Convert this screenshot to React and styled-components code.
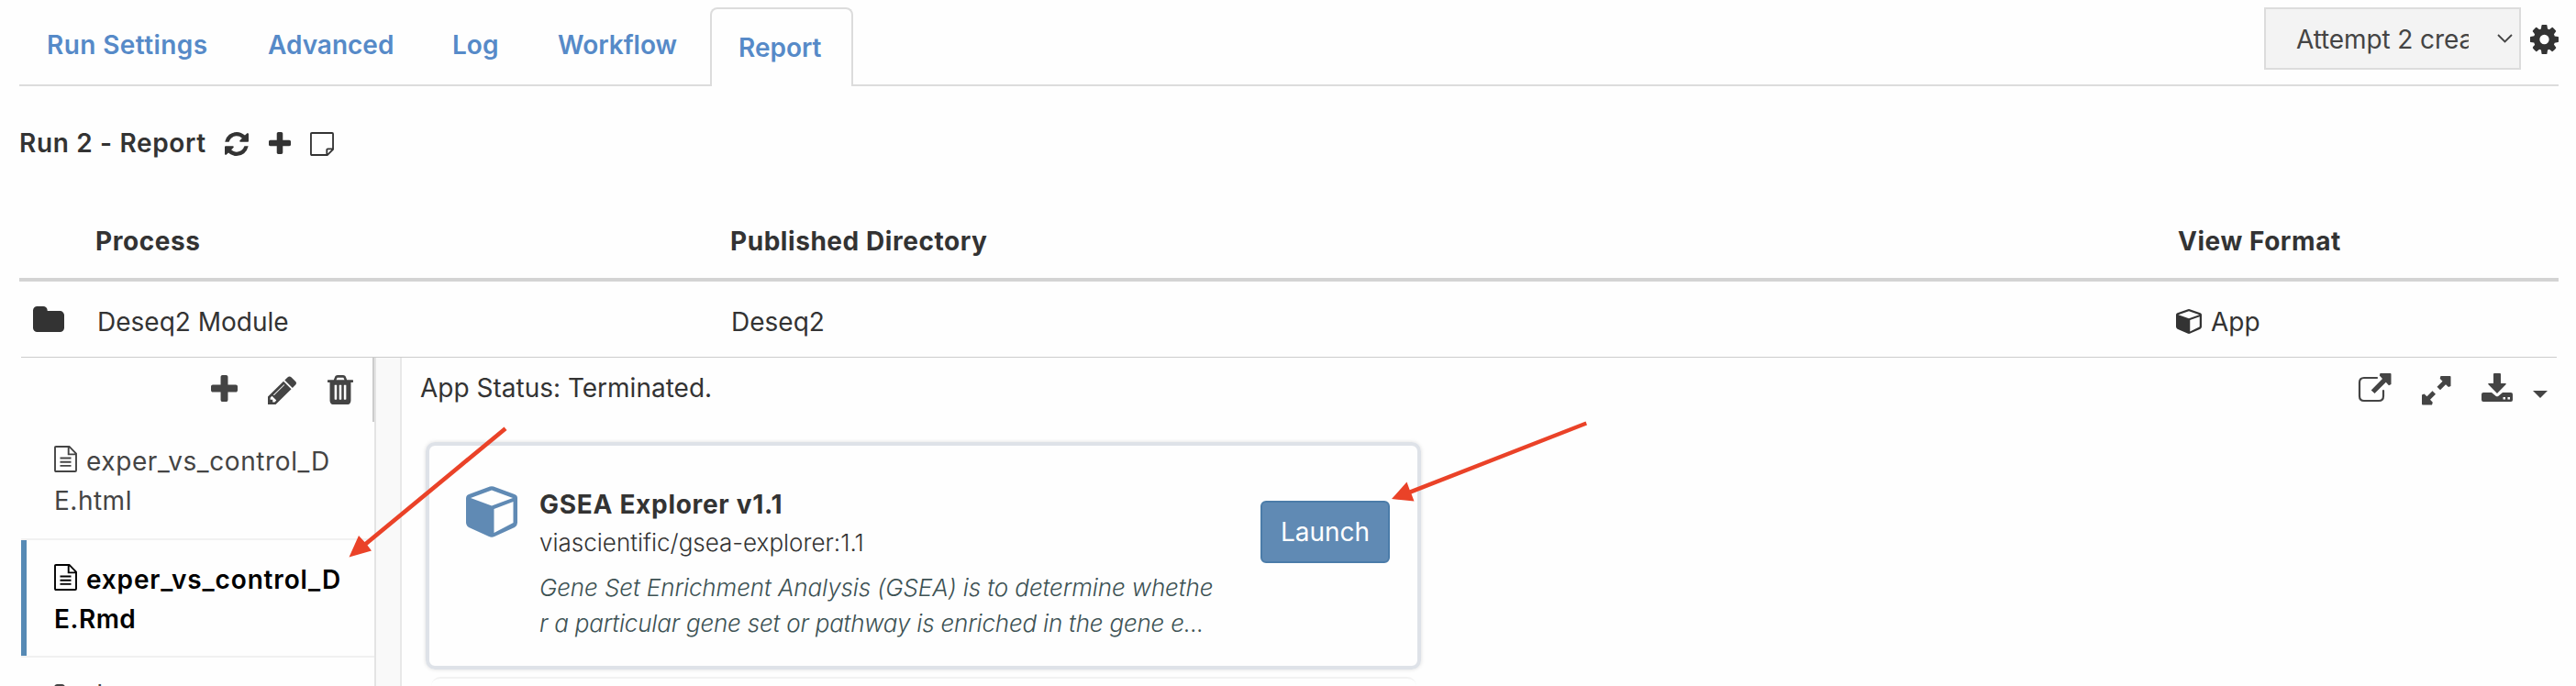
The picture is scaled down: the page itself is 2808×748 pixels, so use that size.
import React from "react";
import styled, { createGlobalStyle, css } from "styled-components";

const Global = createGlobalStyle`
  * { box-sizing: border-box; }
  body { margin: 0; background: #fefefe; overflow: hidden; }
`;

const Page = styled.div`
  position: relative;
  width: 2808px;
  height: 748px;
  overflow: hidden;
  padding: 0 19px 0 21px;
  background: #fefefe;
  color: #333;
  font-family: Inter, "Liberation Sans", sans-serif;
  font-size: 28px;
  line-height: 43px;
`;

const TopBar = styled.div`
  display: flex;
  height: 94px;
  border-bottom: 2px solid #dcdcdc;
`;

const Tab = styled.div`
  height: 94px;
  padding: ${(p) => (p.$active ? "21px 29px 0" : "20px 30px 0")};
  margin: ${(p) => (p.$active ? "8px 0 -2px 2px" : "8px 4px 0 0")};
  color: #568ac8;
  font-weight: 600;
  letter-spacing: ${(p) => p.$ls || 0}px;
  width: ${(p) => p.$w}px;
  white-space: nowrap;
  ${(p) =>
    p.$active &&
    css`
      height: 86px;
      background: #fefefe;
      border: 2px solid #dcdcdc;
      border-bottom: 0;
      border-radius: 8px 8px 0 0;
    `}
`;

const TopRight = styled.div`
  display: flex;
  margin-left: auto;
  gap: 10px;
`;

const Attempt = styled.div`
  display: flex;
  justify-content: space-between;
  width: 280px;
  height: 68px;
  margin-top: 8px;
  padding: 12px 6px 0 33px;
  border: 2px solid #dcdcdc;
  background: #f3f3f3;
  color: #444;
`;

const AttemptText = styled.span`
  width: 188px;
  height: 43px;
  overflow: hidden;
  white-space: nowrap;
  letter-spacing: -0.1px;
`;

const Svg = styled.svg`
  display: block;
  flex: none;
  fill: currentColor;
  color: ${(p) => p.$color || "inherit"};
  margin-top: ${(p) => p.$top || 0}px;
  margin-left: ${(p) => p.$left || 0}px;
`;

const Title = styled.div`
  display: flex;
  height: 126px;
  padding-top: 41px;
  font-weight: 600;
`;
const TitleText = styled.span`
  width: 223px;
  white-space: nowrap;
  letter-spacing: 0.65px;
`;

const Row = styled.div`
  display: grid;
  grid-template-columns: 83px 692px 1578px 1fr;
  white-space: nowrap;
`;
const HeadRow = styled(Row)`
  height: 87px;
  padding-top: 22px;
  font-weight: 700;
  letter-spacing: 0.55px;
  border-bottom: 4px solid #d3d3d3;
`;
const BodyRow = styled(Row)`
  grid-template-columns: 83px 691px 1579px 1fr;
  height: 83px;
  padding-top: 23px;
  margin: 0 2px;
  border-bottom: 1px solid #ccc;
`;
const Cell = styled.div`
  display: flex;
  padding-left: ${(p) => p.$pad || 0}px;
`;

const Body = styled.div`
  display: flex;
  height: 358px;
  margin-left: 2px;
`;
const Files = styled.div`
  flex: none;
  width: 387px;
  border-right: 2px solid #e4e4e4;
`;
const FileTools = styled.div`
  display: flex;
  height: 70px;
  padding-left: 207px;
  color: #444;
  border-right: 2px solid #ccc;
`;
const FileItem = styled.div`
  height: ${(p) => p.$h}px;
  padding: ${(p) => p.$pad}px 0 0 36px;
  border-bottom: 2px solid #f1f1f1;
  color: ${(p) => (p.$active ? "#000" : "#444")};
  font-weight: ${(p) => (p.$active ? 600 : 400)};
  white-space: nowrap;
  ${(p) => p.$active && css`box-shadow: inset 6px 0 #568ab5;`}
`;
const FileLine = styled.div`
  display: flex;
  gap: 10px;
  letter-spacing: ${(p) => p.$ls || 0}px;
`;
const Splitter = styled.div`
  flex: none;
  width: 28px;
  background: #f9f9f9;
  border-right: 2px solid #e8e8e8;
`;
const Main = styled.div`
  flex: 1;
  padding-left: 20px;
`;
const Status = styled.div`
  display: flex;
  height: 92px;
  padding-top: 12px;
`;
const Tools = styled.div`
  display: flex;
  color: #444;
  margin: -12px 12px 0 auto;
`;
const Card = styled.div`
  display: flex;
  width: 1085px;
  height: 248px;
  margin-left: 6px;
  padding: 42px 0 0 40px;
  border: 4px solid #dee2e8;
  border-radius: 10px;
  box-shadow: 0 0 4px #0002;
`;
const NextCard = styled.div`
  width: 1074px;
  height: 20px;
  margin: 8px 0 0 12px;
  border-top: 2px solid #f2f2f2;
  border-radius: 10px;
`;
const CardText = styled.div`
  flex: none;
  width: 786px;
  padding-left: 24px;
  white-space: nowrap;
`;
const Name = styled.div`
  font-weight: 700;
  line-height: 44px;
  letter-spacing: 0.7px;
`;
const Image = styled.div`
  font-size: 26px;
  line-height: 39px;
  font-weight: 300;
`;
const Description = styled.div`
  margin-top: 10px;
  color: #3d5254;
  font-size: 26px;
  font-style: italic;
  font-weight: 300;
  line-height: 39px;
`;
const DescLine = styled.div`
  letter-spacing: ${(p) => p.$ls || 0}px;
`;
const Launch = styled.button`
  flex: none;
  width: 141px;
  height: 68px;
  margin: 18px 0 0 24px;
  padding: 0;
  border: 2px solid #4b7ca9;
  border-radius: 6px;
  background: #608ab4;
  color: #fff;
  font: inherit;
`;
const Arrows = styled.svg`
  position: absolute;
  left: 0;
  top: 0;
  pointer-events: none;
`;

const P = {
  refresh: "M1639 1056q0 5-1 7-64 268-268 434.5t-478 166.5q-146 0-282.5-55t-243.5-157l-129 129q-19 19-45 19t-45-19-19-45v-448q0-26 19-45t45-19h448q26 0 45 19t19 45-19 45l-137 137q71 66 161 102t187 36q134 0 250-65t186-179q11-17 53-117 8-23 30-23h192q13 0 22.5 9.5t9.5 22.5zm25-800v448q0 26-19 45t-45 19h-448q-26 0-45-19t-19-45 19-45l138-138q-148-137-349-137-134 0-250 65t-186 179q-11 17-53 117-8 23-30 23h-199q-13 0-22.5-9.5t-9.5-22.5v-7q65-268 270-434.5t480-166.5q146 0 284 55.5t245 156.5l130-129q19-19 45-19t45 19 19 45z",
  plus: "M1600 736v192q0 40-28 68t-68 28h-416v416q0 40-28 68t-68 28h-192q-40 0-68-28t-28-68v-416h-416q-40 0-68-28t-28-68v-192q0-40 28-68t68-28h416v-416q0-40 28-68t68-28h192q40 0 68 28t28 68v416h416q40 0 68 28t28 68z",
  trash: "M704 1376v-704q0-14-9-23t-23-9h-64q-14 0-23 9t-9 23v704q0 14 9 23t23 9h64q14 0 23-9t9-23zm256 0v-704q0-14-9-23t-23-9h-64q-14 0-23 9t-9 23v704q0 14 9 23t23 9h64q14 0 23-9t9-23zm256 0v-704q0-14-9-23t-23-9h-64q-14 0-23 9t-9 23v704q0 14 9 23t23 9h64q14 0 23-9t9-23zm-544-992h448l-48-117q-7-9-17-11h-317q-10 2-17 11zm928 32v64q0 14-9 23t-23 9h-96v948q0 83-47 143.5t-113 60.5h-832q-66 0-113-58.5t-47-141.5v-952h-96q-14 0-23-9t-9-23v-64q0-14 9-23t23-9h309l70-167q15-37 54-63t79-26h320q40 0 79 26t54 63l70 167h309q14 0 23 9t9 23z",
  pencil: "M491 1536l91-91-235-235-91 91v107h128v128h107zm523-928q0-22-22-22-10 0-17 7l-542 542q-7 7-7 17 0 22 22 22 10 0 17-7l542-542q7-7 7-17zm-54-192l416 416-832 832h-416v-416zm683 96q0 53-37 90l-166 166-416-416 166-165q36-38 90-38 53 0 91 38l235 234q37 39 37 91z",
  folder: "M1728 608v704q0 92-66 158t-158 66h-1216q-92 0-158-66t-66-158v-960q0-92 66-158t158-66h320q92 0 158 66t66 158v32h672q92 0 158 66t66 158z",
  cog: "M1152 896q0-106-75-181t-181-75-181 75-75 181 75 181 181 75 181-75 75-181zm512-109v222q0 12-8 23t-20 13l-185 28q-19 54-39 91 35 50 107 138 10 12 10 25t-9 23q-27 37-99 108t-94 71q-12 0-26-9l-138-108q-44 23-91 38-16 136-29 186-7 28-36 28h-222q-14 0-24.5-8.5t-11.5-21.5l-28-184q-49-16-90-37l-141 107q-10 9-25 9-14 0-25-11-126-114-165-168-7-10-7-23 0-12 8-23 15-21 51-66.5t54-70.5q-27-50-41-99l-183-27q-13-2-21-12.5t-8-23.5v-222q0-12 8-23t19-13l186-28q14-46 39-92-40-57-107-138-10-12-10-24 0-10 9-23 26-36 98.5-107.5t94.5-71.5q13 0 26 10l138 107q44-23 91-38 16-136 29-186 7-28 36-28h222q14 0 24.5 8.5t11.5 21.5l28 184q49 16 90 37l142-107q9-9 24-9 13 0 25 10 129 119 165 170 7 8 7 22 0 12-8 23-15 21-51 66.5t-54 70.5q26 50 41 98l183 28q13 2 21 12.5t8 23.5z",
};

/* box: the part of the 1792-unit glyph grid that the icon fills */
const Glyph = ({ d, box, w, h, top, left }) => (
  <Svg $top={top} $left={left} width={w} height={h} viewBox={box} preserveAspectRatio="none">
    <path d={d} />
  </Svg>
);

const Cube = ({ w, h, top, left, color }) => (
  <Svg $top={top} $left={left} $color={color} width={w} height={h} viewBox="0 0 56 56" preserveAspectRatio="none">
    <path
      fillRule="evenodd"
      d="M26 .6q2-.8 4 0l23 8.400q3 1 3 4v27q0 3-3 5L31 55q-3 1.600-6 0L3 45q-3-2-3-5V13q0-3 3-4zM28 4.500L5 13l23 8.500 23-8.500zM30.500 25v26l21-11V17z"
    />
  </Svg>
);

const FileIcon = () => (
  <Svg $top={4} width="25" height="29" viewBox="0 0 25 30" preserveAspectRatio="none">
    <path d="M1 2Q1 1 2 1H16.500L24 9V28Q24 29 23 29H2Q1 29 1 28ZM15.700 1V9.700H24" fill="none" stroke="currentColor" strokeWidth="1.900" />
    <path d="M6.500 13h12v2h-12zM6.500 17.300h12v2h-12zM6.500 21.600h12v2h-12z" />
  </Svg>
);

export default function App() {
  return (
    <Page>
      <Global />
      <TopBar>
        <Tab $w={237} $ls={0.4}>Run Settings</Tab>
        <Tab $w={197}>Advanced</Tab>
        <Tab $w={111}>Log</Tab>
        <Tab $w={190}>Workflow</Tab>
        <Tab $active $w={156}>Report</Tab>
        <TopRight>
          <Attempt>
            <AttemptText>Attempt 2 created</AttemptText>
            <Svg $top={14} width="19" height="12" viewBox="0 0 19 12">
              <path d="M2 2L9.500 9.500 17 2" fill="none" stroke="#444" strokeWidth="1.800" />
            </Svg>
          </Attempt>
          <Glyph d={P.cog} box="128 128 1536 1536" w={31} h={32} top={27} />
        </TopRight>
      </TopBar>

      <Title>
        <TitleText>Run 2 - Report</TitleText>
        <Glyph d={P.refresh} box="128 128 1536 1536" w={26} h={26} top={9} left={1} />
        <Glyph d={P.plus} box="192 128 1408 1408" w={24} h={24} top={9} left={22} />
        <Svg $top={9} $left={21} width="26" height="26" viewBox="0 0 27 27">
          <path d="M1 2Q1 1 2 1H25Q26 1 26 2V19.500L19.500 26H2Q1 26 1 25ZM26 19H20Q19 19 19 20V26" fill="none" stroke="currentColor" strokeWidth="1.900" />
        </Svg>
      </Title>

      <HeadRow>
        <Cell />
        <Cell>Process</Cell>
        <Cell>Published Directory</Cell>
        <Cell>View Format</Cell>
      </HeadRow>
      <BodyRow>
        <Cell $pad={13}><Glyph d={P.folder} box="64 128 1664 1408" w={34} h={28} top={4} /></Cell>
        <Cell>Deseq2 Module</Cell>
        <Cell>Deseq2</Cell>
        <Cell><Cube w={28} h={27} top={7} left={-4} /><Cell $pad={10}>App</Cell></Cell>
      </BodyRow>

      <Body>
        <Files>
          <FileTools>
            <Glyph d={P.plus} box="192 128 1408 1408" w={29} h={29} top={19} />
            <Glyph d={P.pencil} box="128 128 1516 1536" w={31} h={31} top={20} left={33} />
            <Glyph d={P.trash} box="192 128 1408 1536" w={28} h={32} top={19} left={34} />
          </FileTools>
          <FileItem $h={129} $pad={22}>
            <FileLine $ls={0.6}><FileIcon />exper_vs_control_D</FileLine>
            <FileLine $ls={0.5}>E.html</FileLine>
          </FileItem>
          <FileItem $active $h={128} $pad={22}>
            <FileLine $ls={0.85}><FileIcon />exper_vs_control_D</FileLine>
            <FileLine $ls={0.5}>E.Rmd</FileLine>
          </FileItem>
          <FileItem $h={129} $pad={19}>
            <FileLine><Glyph d={P.folder} box="64 128 1664 1408" w={26} h={23} top={10} />de</FileLine>
          </FileItem>
        </Files>
        <Splitter />
        <Main>
          <Status>
            App Status: Terminated.
            <Tools>
              <Svg $top={17} width="37" height="32" viewBox="0 0 37 32">
                <path d="M21 5H7Q2 5 2 10V25Q2 30 7 30H23Q28 30 28 25V19" fill="none" stroke="currentColor" strokeWidth="2.200" strokeLinecap="round" />
                <path d="M24.500 0H35.500Q36.500 0 36.500 1V12L34 13.200 30.800 9.800 18.500 22 14.700 18.500 27 6 23.800 2.500Z" />
              </Svg>
              <Svg $top={20} $left={33} width="32" height="32" viewBox="0 0 32 32">
                <path d="M20.500 0H30.500Q31.500 0 31.500 1V11L29 12 26 9.300 20 15.300 16.500 11.800 22.500 5.800 19.700 2.800ZM11 31.500H1Q0 31.500 0 30.500V20.500L2.500 19.500 5.500 22.200 11.500 16.200 15 19.700 9 25.700 11.800 28.700Z" />
              </Svg>
              <Svg $top={17} $left={33} width="34" height="32" viewBox="0 0 34 32">
                <path fillRule="evenodd" d="M13 1Q13 0 14 0H20Q21 0 21 1V11H26Q27.500 11 26.500 12.200L17 22 7.500 12.200Q6.500 11 8 11H13ZM2 21H11L15.500 24.800Q17 25.800 18.500 24.800L23 21H32Q34 21 34 23V29Q34 31 32 31H2Q0 31 0 29V23Q0 21 2 21ZM23.500 26v2.500h2.500v-2.500zM28.500 26v2.500h2.500v-2.500z" />
              </Svg>
              <Svg $top={36} $left={22} width="16" height="8" viewBox="0 0 16 8"><path d="M0 0H16L8 8Z" /></Svg>
            </Tools>
          </Status>
          <Card>
            <Cube w={56} h={56} top={2} color="#608ab4" />
            <CardText>
              <Name>GSEA Explorer v1.1</Name>
              <Image>viascientific/gsea-explorer:1.1</Image>
              <Description>
                <DescLine $ls={-0.1}>Gene Set Enrichment Analysis (GSEA) is to determine whethe</DescLine>
                <DescLine $ls={-0.2}>r a particular gene set or pathway is enriched in the gene e...</DescLine>
              </Description>
            </CardText>
            <Launch>Launch</Launch>
          </Card>
          <NextCard />
        </Main>
      </Body>

      <Arrows width="2808" height="748" fill="#ea4228">
        <path d="M549.500 465.500L552.500 469 400.500 594.500 405 600.500 380.500 607.500 391 584 397.500 591Z" />
        <path d="M1728.500 459.500L1730 463.500 1538.500 538.500 1541.500 546.500 1517 544 1533.500 525.500 1536.700 534.300Z" />
      </Arrows>
    </Page>
  );
}
